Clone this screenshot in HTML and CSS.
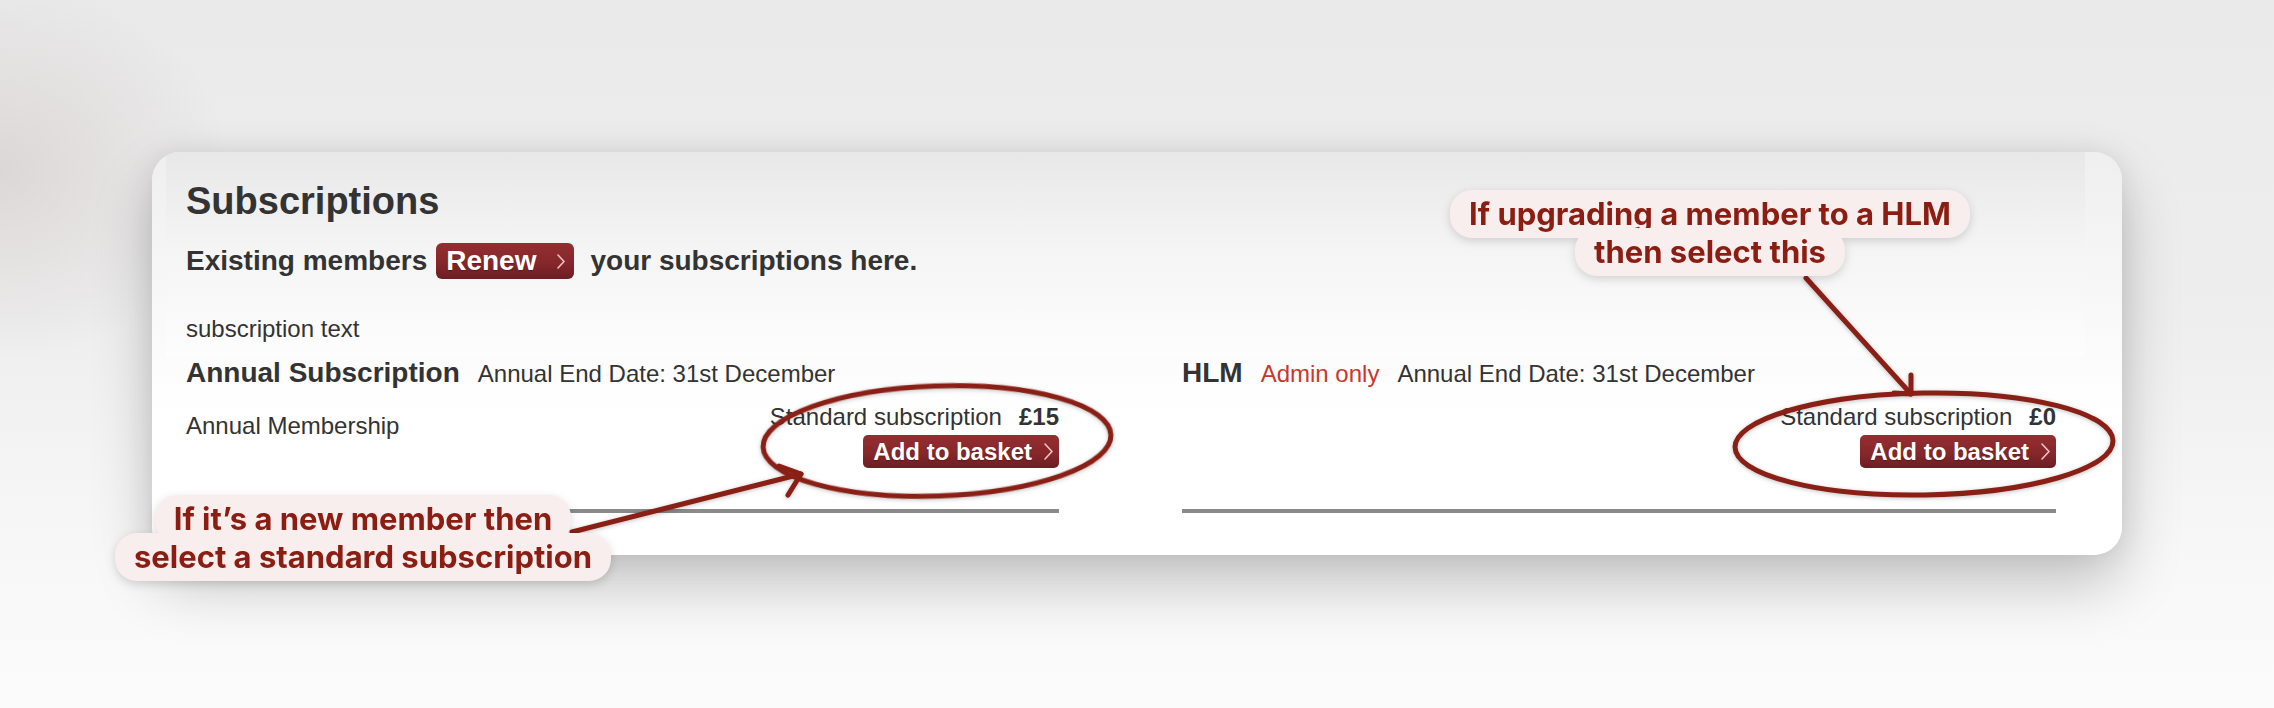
FILE: index.html
```html
<!DOCTYPE html>
<html lang="en">
<head>
<meta charset="utf-8">
<title>Subscriptions</title>
<link rel="stylesheet" href="styles.css">
</head>
<body>
<div class="page">
  <div class="card">
    <div class="intro">
      <h1 class="title">Subscriptions</h1>
      <div class="renew-row">
        <span>Existing members</span>
        <a class="btn btn-renew" href="#">Renew<svg class="chev" viewBox="0 0 10 17" width="10" height="17"><path d="M2 2 L8 8.5 L2 15"/></svg></a>
        <span>your subscriptions here.</span>
      </div>
      <p class="sub-text">subscription text</p>
    </div>
    <div class="plans">
      <section class="plan">
        <div class="plan-head">
          <span class="plan-name">Annual Subscription</span>
          <span class="plan-meta">Annual End Date: 31st December</span>
        </div>
        <div class="plan-body">
          <div class="plan-desc">Annual Membership</div>
          <div class="plan-buy">
            <div class="price-line"><span>Standard subscription</span><strong>£15</strong></div>
            <a class="btn btn-basket" href="#">Add to basket<svg class="chev" viewBox="0 0 11 19" width="11" height="19"><path d="M2 2 L9 9.5 L2 17"/></svg></a>
          </div>
        </div>
        <hr class="plan-rule">
      </section>
      <section class="plan">
        <div class="plan-head">
          <span class="plan-name">HLM</span>
          <span class="plan-meta admin">Admin only</span>
          <span class="plan-meta">Annual End Date: 31st December</span>
        </div>
        <div class="plan-body">
          <div class="plan-buy">
            <div class="price-line"><span>Standard subscription</span><strong>£0</strong></div>
            <a class="btn btn-basket" href="#">Add to basket<svg class="chev" viewBox="0 0 11 19" width="11" height="19"><path d="M2 2 L9 9.5 L2 17"/></svg></a>
          </div>
        </div>
        <hr class="plan-rule">
      </section>
    </div>
  </div>

  <svg class="marks" viewBox="0 0 2274 708" width="2274" height="708">
    <g class="ink">
      <ellipse cx="937" cy="441" rx="174" ry="55" transform="rotate(-2 937 441)"/>
      <ellipse cx="1924" cy="444" rx="189" ry="51" transform="rotate(-1 1924 444)"/>
      <path d="M572 532 L801 474"/>
      <path d="M779 466 L801 474 L788 495"/>
      <path d="M1806 278 L1911 394"/>
      <path d="M1911 375 L1911 394 L1894 393"/>
    </g>
  </svg>

  <div class="note note-hlm">
    <span class="note-line">If upgrading a member to a HLM</span>
    <span class="note-line">then select this</span>
  </div>
  <div class="note note-new">
    <span class="note-line">If it’s a new member then</span>
    <span class="note-line">select a standard subscription</span>
  </div>
</div>
</body>
</html>
```

FILE: styles.css
```css
html, body {
  margin: 0;
  padding: 0;
}

body {
  width: 2274px;
  height: 708px;
  overflow: hidden;
  font-family: "Liberation Sans", Arial, sans-serif;
  color: #333;
  background:
    radial-gradient(ellipse 230px 190px at 0 170px, rgba(200, 190, 188, 0.45), rgba(200, 190, 188, 0) 100%),
    linear-gradient(to bottom, #eaeaea 0%, #eeeeee 45%, #f8f8f8 80%, #fbfbfb 100%);
}

.page {
  position: relative;
  width: 2274px;
  height: 708px;
  box-sizing: border-box;
  padding: 152px 0 0 152px;
}

.card {
  width: 1970px;
  border-radius: 28px;
  overflow: hidden;
  background: linear-gradient(to bottom, #efefef 0, #fbfbfb 200px, #ffffff 260px);
  box-shadow: 0 30px 60px rgba(0, 0, 0, 0.21), 0 0 28px rgba(0, 0, 0, 0.08);
}

.intro {
  margin: 0 37px 0 14px;
  padding: 27px 0 14px 20px;
  background: linear-gradient(to bottom, #e8e8e8 0%, #f4f4f4 45%, #fdfdfd 100%);
}

.title {
  margin: 0;
  font-size: 38px;
  line-height: 44px;
  font-weight: 700;
  color: #333;
}

.renew-row {
  display: flex;
  align-items: center;
  height: 36px;
  margin-top: 20px;
  font-size: 28px;
  font-weight: 700;
  color: #333;
}

.btn {
  display: inline-flex;
  align-items: center;
  color: #fff;
  text-decoration: none;
  font-weight: 700;
  background: linear-gradient(to bottom, #932e31 0%, #86272b 55%, #6c1e23 100%);
  text-shadow: 0 1px 1px rgba(0, 0, 0, 0.25);
}

.chev {
  display: block;
  flex: none;
}

.chev path {
  fill: none;
  stroke: #f1c3c3;
  stroke-width: 1.6;
  stroke-linecap: round;
  stroke-linejoin: round;
}

.btn-renew {
  height: 36px;
  margin: 0 16px 0 9px;
  padding: 0 8px 0 10px;
  gap: 20px;
  border-radius: 6px;
  font-size: 28px;
}

.sub-text {
  margin: 36px 0 0;
  font-size: 24px;
  line-height: 28px;
}

.plans {
  display: grid;
  grid-template-columns: 873px 874px;
  column-gap: 123px;
  padding: 0 66px 42px 34px;
}

.plan-head {
  display: flex;
  align-items: baseline;
  gap: 18px;
  line-height: 32px;
}

.plan-name {
  font-size: 28px;
  font-weight: 700;
}

.plan-meta {
  font-size: 24px;
}

.plan-meta.admin {
  color: #c9372c;
}

.plan-body {
  display: flex;
  justify-content: space-between;
  margin-top: 13px;
}

.plan-desc {
  margin-top: 9px;
  font-size: 24px;
  line-height: 28px;
}

.plan-buy {
  display: flex;
  flex-direction: column;
  align-items: flex-end;
  margin-left: auto;
}

.price-line {
  display: flex;
  gap: 17px;
  font-size: 24px;
  line-height: 28px;
}

.btn-basket {
  height: 33px;
  margin-top: 4px;
  padding: 0 5px 0 10px;
  gap: 11px;
  border-radius: 5px;
  font-size: 24px;
}

.plan-rule {
  margin: 41px 0 0;
  height: 4px;
  border: 0;
  background: #8a8a8a;
}

/* annotation overlay */
.marks {
  position: absolute;
  left: 0;
  top: 0;
  pointer-events: none;
}

.ink ellipse,
.ink path {
  fill: none;
  stroke: #8a1f15;
  stroke-width: 5;
  stroke-linecap: round;
  stroke-linejoin: round;
}

.ink {
  filter: drop-shadow(0 1px 2px rgba(0, 0, 0, 0.25));
}

.note {
  position: absolute;
  display: flex;
  flex-direction: column;
  align-items: center;
  font-family: Inter, "Noto Sans", sans-serif;
  font-weight: 700;
  font-size: 31px;
  color: #8b1d13;
  filter: drop-shadow(0 3px 5px rgba(0, 0, 0, 0.15));
}

.note-line {
  display: block;
  padding: 5px 19px;
  line-height: 38px;
  border-radius: 22px;
  background: #f8eeee;
  white-space: nowrap;
}

.note-line + .note-line {
  margin-top: -10px;
}

.note-hlm {
  left: 1450px;
  top: 190px;
  width: 520px;
}

.note-new {
  left: 113px;
  top: 495px;
  width: 500px;
}
```
